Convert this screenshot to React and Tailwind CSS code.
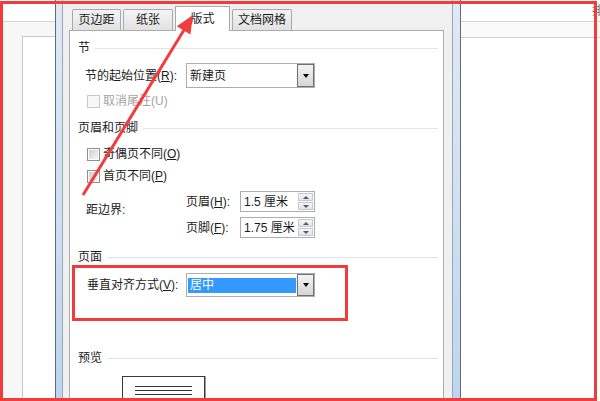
// Word 页面设置 对话框 - 版式 标签页
import React from 'react'

function Section({ title, className }) {
    return (
        <div className={`flex h-[16px] items-center pl-[8px] pr-[5px] ${className}`}>
            <span className="leading-none">{title}</span>
            <span className="ml-[5px] h-px flex-1 bg-[#dde4ec]" />
        </div>
    )
}

function Check({ disabled }) {
    return (
        <span
            className={
                disabled
                    ? 'flex h-[13px] w-[13px] shrink-0 border border-[#c9c9c9] bg-[#f7f7f7]'
                    : 'flex h-[13px] w-[13px] shrink-0 border border-[#8e8f8f] p-px bg-white'
            }
        >
            {!disabled && <span className="flex-1 bg-linear-to-br from-[#cdd0d4] to-[#f4f4f4]" />}
        </span>
    )
}

function DropBtn() {
    return (
        <span className="flex w-[17px] items-center justify-center border border-[#707070] bg-linear-to-b from-[#f3f3f3] to-[#d6d6d6]">
            <span className="h-0 w-0 border-l-[3.5px] border-r-[3.5px] border-t-[4px] border-l-transparent border-r-transparent border-t-black" />
        </span>
    )
}

function SpinBox({ value }) {
    return (
        <div className="flex h-[21px] w-[75px] border border-[#abadb3] bg-white">
            <span className="flex flex-1 items-center pl-[3px] leading-none">{value}</span>
            <span className="my-px mr-px flex w-[15px] flex-col gap-px">
                <span className="flex flex-1 items-center justify-center border border-[#c5c9cf] bg-linear-to-b from-[#f6f6f6] to-[#e4e4e4]">
                    <span className="h-0 w-0 border-b-[3px] border-l-[3px] border-r-[3px] border-b-[#4b5a77] border-l-transparent border-r-transparent" />
                </span>
                <span className="flex flex-1 items-center justify-center border border-[#c5c9cf] bg-linear-to-b from-[#f6f6f6] to-[#e4e4e4]">
                    <span className="h-0 w-0 border-t-[3px] border-l-[3px] border-r-[3px] border-t-[#4b5a77] border-l-transparent border-r-transparent" />
                </span>
            </span>
        </div>
    )
}

export default function App() {
    const tabs = [
        { label: '页边距', w: 'w-[49px]' },
        { label: '纸张', w: 'w-[50px]' },
        { label: '版式', w: 'w-[55px]', active: true },
        { label: '文档网格', w: 'w-[60px]' },
    ]

    return (
        <div className="relative flex h-[401px] w-[600px] overflow-hidden bg-white font-['Liberation_Sans','Noto_Sans_CJK_SC',sans-serif] text-[12px] text-[#1b1b1b]">
            {/* 왼쪽 문서 영역 */}
            <div className="flex w-[55px] shrink-0 flex-col">
                <div className="h-[22px] border-b border-[#d6d6d6] bg-white" />
                <div className="flex flex-1 flex-col bg-[#f7f7f7] pl-[22px] pt-[14px]">
                    <div className="flex-1 border-l border-t border-[#c8c8c8] bg-white" />
                </div>
            </div>

            {/* 대화상자 */}
            <div className="flex w-[406px] shrink-0">
                <div className="w-[8px] border-l border-r border-l-[#5d6b7a] border-r-[#9aa6b2] bg-linear-to-b from-[#dfe9f4] via-[#cfe0f2] to-[#bcd5ef]" />
                <div className="flex flex-col bg-[#f0f0f0] pl-[6px] pr-[8px]">
                    <div className="flex items-end gap-[2px] pl-[3px] pt-[6px]">
                        {tabs.map((t) =>
                            t.active ? (
                                <div
                                    key={t.label}
                                    className={`relative z-10 mb-[-1px] flex h-[25px] items-center justify-center border border-b-0 border-[#a9a9a9] bg-white ${t.w}`}
                                >
                                    {t.label}
                                </div>
                            ) : (
                                <div
                                    key={t.label}
                                    className={`flex h-[21px] items-center justify-center rounded-t-[2px] border border-b-0 border-[#a9a9a9] bg-linear-to-b from-[#f4f4f4] to-[#e2e2e2] ${t.w}`}
                                >
                                    {t.label}
                                </div>
                            ),
                        )}
                    </div>

                    <div className="flex w-[375px] flex-1 flex-col border border-[#adadad] bg-white pt-[9px]">
                        <Section title="节" />

                        <div className="mt-[7px] flex h-[25px] items-center pl-[15px]">
                            <span className="w-[101px]">
                                节的起始位置(<span className="underline">R</span>):
                            </span>
                            <div className="flex h-[25px] w-[129px] border border-[#abadb3] bg-white">
                                <span className="flex flex-1 items-center pl-[3px]">新建页</span>
                                <DropBtn />
                            </div>
                        </div>

                        <div className="mt-[6px] flex h-[14px] items-center gap-[3px] pl-[17px] text-[#a3a3a3]">
                            <Check disabled />
                            <span>取消尾注(U)</span>
                        </div>

                        <Section title="页眉和页脚" className="mt-[12px]" />

                        <div className="mt-[11px] flex h-[14px] items-center gap-[3px] pl-[17px]">
                            <Check />
                            <span>
                                奇偶页不同(<span className="underline">O</span>)
                            </span>
                        </div>
                        <div className="mt-[8px] flex h-[14px] items-center gap-[3px] pl-[17px]">
                            <Check />
                            <span>
                                首页不同(<span className="underline">P</span>)
                            </span>
                        </div>

                        <div className="mt-[8px] flex pl-[16px]">
                            <span className="mt-[12px] flex h-[14px] w-[100px] items-center">距边界:</span>
                            <div className="flex flex-col gap-[5px]">
                                <div className="flex items-center">
                                    <span className="w-[54px]">
                                        页眉(<span className="underline">H</span>):
                                    </span>
                                    <SpinBox value="1.5 厘米" />
                                </div>
                                <div className="flex items-center">
                                    <span className="w-[54px]">
                                        页脚(<span className="underline">F</span>):
                                    </span>
                                    <SpinBox value="1.75 厘米" />
                                </div>
                            </div>
                        </div>

                        <Section title="页面" className="mt-[11px]" />

                        {/* 빨간 강조 박스 */}
                        <div className="ml-[2px] flex h-[56px] w-[276px] items-start border-[3px] border-[#f23c3c] pl-[12px] pt-[5px]">
                            <span className="flex h-[24px] w-[99px] items-center">
                                垂直对齐方式(<span className="underline">V</span>):
                            </span>
                            <div className="flex h-[24px] w-[129px] border border-[#abadb3] bg-white">
                                <span className="flex flex-1 items-center p-px">
                                    <span className="flex h-[15px] flex-1 items-center bg-[#3399ff] pl-[2px] text-white">
                                        居中
                                    </span>
                                </span>
                                <DropBtn />
                            </div>
                        </div>

                        <Section title="预览" className="mt-[29px]" />

                        <div className="ml-[52px] mt-[10px] h-[40px] w-[83px] border border-[#3a3a3a] bg-white shadow-[1px_0_0_#9a9a9a]">
                            <div className="ml-[12px] mt-[9px] flex w-[57px] flex-col gap-[3px]">
                                <span className="h-px bg-[#333]" />
                                <span className="h-px bg-[#333]" />
                                <span className="h-px bg-[#333]" />
                            </div>
                        </div>
                    </div>
                </div>
                <div className="w-[9px] border-l border-r border-l-[#9aa6b2] border-r-[#5d6b7a] bg-linear-to-b from-[#dfe9f4] via-[#cfe0f2] to-[#bcd5ef]" />
            </div>

            {/* 오른쪽 문서 영역 */}
            <div className="flex flex-1 flex-col">
                <div className="flex h-[22px] items-center border-b border-[#d6d6d6] bg-white pl-[131px] text-[#666]">
                    <span className="whitespace-nowrap">排</span>
                </div>
                <div className="h-[16px] border-b border-[#cfcfcf] bg-[#fafafa]" />
                <div className="flex-1 bg-white" />
            </div>

            {/* 주석: 빨간 테두리와 화살표 */}
            <div className="pointer-events-none absolute bottom-0 left-0 right-[3px] top-[1px] z-20 border-[3px] border-[#f23c3c]" />
            <svg className="pointer-events-none absolute left-0 top-0 z-20" width="600" height="401" viewBox="0 0 600 401">
                <line x1="83" y1="195" x2="184" y2="30" stroke="#f23c3c" strokeWidth="3" />
                <polygon points="193,15 190.4,34.6 176.8,26.2" fill="#f23c3c" />
            </svg>
        </div>
    )
}
